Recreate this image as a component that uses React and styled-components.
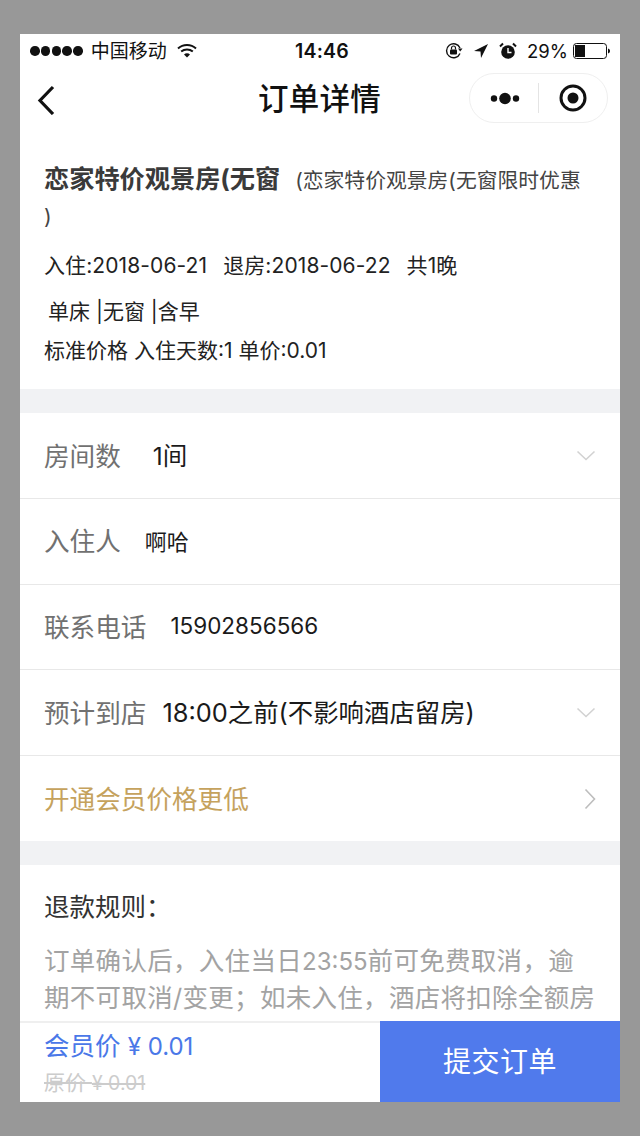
import React from 'react';
import styled, { createGlobalStyle } from 'styled-components';

const Global = createGlobalStyle`
  html, body { margin: 0; padding: 0; background: #989898; }
  body { font-family: Inter, "Noto Sans CJK SC", sans-serif; }
  * { box-sizing: border-box; }
`;
const Page = styled.div`
  width: 640px; height: 1136px; padding: 34px 20px; background: #989898;
`;
const Phone = styled.div`
  width: 600px; height: 1068px; background: #fff; display: flex; flex-direction: column; overflow: hidden;
`;
const StatusBar = styled.div`
  height: 34px; flex: none; display: grid; grid-template-columns: 1fr auto 1fr; align-items: center;
  padding: 0 9px 0 10px; color: #111;
`;
const StatusLeft = styled.div`display: flex; align-items: center;`;
const StatusRight = styled.div`display: flex; align-items: center; justify-content: flex-end;`;
const Dots = styled.div`display: flex; gap: 1.2px; margin-right: 8px;`;
const Dot = styled.span`width: 9.6px; height: 9.6px; border-radius: 50%; background: #111;`;
const Carrier = styled.span`font-size: 19px; margin-right: 10px; line-height: 1;`;
const Time = styled.span`font-size: 19.5px; font-weight: 600; letter-spacing: .2px; margin-left: 3px;`;
const Percent = styled.span`font-size: 18.5px; margin: 0 5px 0 10px;`;
const StatusIcon = styled.svg`display: block; margin-left: ${p => p.$gap || 0}px;`;

const NavBar = styled.div`
  height: 66px; flex: none; position: relative; display: flex; align-items: center; justify-content: center;
`;
const NavTitle = styled.div`font-size: 30.5px; font-weight: 500; color: #111; letter-spacing: .3px; margin: -8px 0 0 -1px;`;
const BackButton = styled.svg`position: absolute; left: 16px; top: 17px;`;
const Capsule = styled.div`
  position: absolute; right: 12px; top: 5px; width: 139px; height: 50px; border-radius: 25px;
  border: 1px solid #efefef; display: flex; align-items: center; background: #fff;
`;
const CapsuleCell = styled.div`flex: 1; height: 100%; display: flex; align-items: center; justify-content: center;`;
const CapsuleDivider = styled.div`width: 1px; height: 30px; background: #e4e4e4;`;

const Summary = styled.section`
  height: 255.4px; flex: none; padding: 23px 24px 0; color: #222;
`;
const TitleLine = styled.div`font-size: 20.8px; line-height: 44px; color: #444; white-space: nowrap;`;
const HotelName = styled.span`font-size: 25.2px; font-weight: 700; color: #3a3a3a; margin-right: 15px;`;
const Paren = styled.div`font-size: 21px; line-height: 26px; margin-top: 1px; color: #444;`;
const InfoLine = styled.div`
  font-size: 21px; line-height: 30px; color: #222; margin-top: ${p => p.$top}px; padding-left: ${p => p.$indent || 0}px;
  white-space: pre; display: flex; gap: ${p => p.$gap || 0}px; letter-spacing: ${p => p.$track || 0}px;
`;
const Gap = styled.div`height: 24px; flex: none; background: #f1f2f4;`;
const Row = styled.div`
  height: ${p => p.$h || 85.7}px; flex: none; display: flex; align-items: center; padding: 0 24px;
  border-bottom: ${p => p.$last ? 'none' : '1px solid #e8e8e8'};
`;
const RowLabel = styled.span`font-size: 25.6px; color: ${p => p.$gold ? '#c5a25d' : '#717171'}; flex: none; margin-top: -3px;`;
const RowValue = styled.span`font-size: ${p => p.$size || 24.5}px; color: #1a1a1a; margin-left: ${p => p.$gap}px; flex: 1; margin-top: -3px;`;
const Arrow = styled.svg`flex: none; display: block; margin-left: auto;`;

const Rules = styled.section`
  flex: 1; min-height: 0; padding: 24px 24px 0; overflow: hidden;
`;
const RulesTitle = styled.div`font-size: 25.5px; line-height: 36px; color: #333;`;
const RulesText = styled.div`font-size: 25.5px; line-height: 36px; color: #a3a3a3; margin-top: 18px; letter-spacing: .3px;`;
const RulesTime = styled.span`font-size: 24px; letter-spacing: 0;`;

const Footer = styled.div`
  height: 81px; flex: none; display: flex; border-top: 2px solid #efefef; background: #fff;
`;
const Prices = styled.div`flex: 1; padding: 5px 0 0 24px;`;
const Member = styled.div`font-size: 25.5px; line-height: 36px; color: #4a78e8;`;
const MemberAmount = styled.span`font-size: 24px;`;
const Original = styled.div`font-size: 21px; line-height: 30px; color: #ccc; text-decoration: line-through; margin-top: 3px;`;
const OriginalAmount = styled.span`font-size: 19.5px;`;
const Submit = styled.div`
  width: 240px; margin-top: -2px; padding-bottom: 4px; background: #507aec; color: #fff; font-size: 28px; display: flex;
  align-items: center; justify-content: center; letter-spacing: .5px;
`;

const Chevron = () => (
  <Arrow width="20" height="12" viewBox="0 0 20 12" fill="none">
    <path d="M1.5 1.5 L10 9.5 L18.5 1.5" stroke="#d2d2d2" strokeWidth="1.6" />
  </Arrow>
);

export default function App() {
  return (
    <Page>
      <Global />
      <Phone>
        <StatusBar>
          <StatusLeft>
            <Dots>{[0, 1, 2, 3, 4].map(i => <Dot key={i} />)}</Dots>
            <Carrier>中国移动</Carrier>
            <svg width="20" height="16" viewBox="0 0 20 16" fill="none">
              <path d="M1 5.5 C6 .8 14 .8 19 5.5" stroke="#111" strokeWidth="2" />
              <path d="M4.2 8.6 C7.5 5.8 12.5 5.8 15.8 8.6" stroke="#111" strokeWidth="2" />
              <path d="M7 11.4 C8.8 10 11.2 10 13 11.4 L10 14.6 Z" fill="#111" />
            </svg>
          </StatusLeft>
          <Time>14:46</Time>
          <StatusRight>
            <StatusIcon width="20" height="18" viewBox="0 0 20 18" fill="none">
              <path d="M16 11.5 A7 7 0 1 1 16 6" stroke="#111" strokeWidth="1.4" />
              <path d="M14 6.5 L18.5 6.5 L16.2 9.5 Z" fill="#111" />
              <rect x="6" y="7.5" width="7" height="5" rx="1" fill="#111" />
              <path d="M7.5 7.5 V6 A2 2 0 0 1 11.5 6 V7.5" stroke="#111" strokeWidth="1.2" />
            </StatusIcon>
            <StatusIcon $gap={9} width="16" height="16" viewBox="0 0 16 16">
              <path d="M15 1 L1 8 L7.5 8.5 L8 15 Z" fill="#111" />
            </StatusIcon>
            <StatusIcon $gap={10} width="18" height="18" viewBox="0 0 18 18" fill="none">
              <circle cx="9" cy="10" r="6.8" fill="#111" />
              <path d="M9 6 V10.5 H12.5" stroke="#fff" strokeWidth="1.4" />
              <path d="M1 4.5 L4 1.5 M17 4.5 L14 1.5" stroke="#111" strokeWidth="2" />
            </StatusIcon>
            <Percent>29%</Percent>
            <svg width="38" height="16" viewBox="0 0 38 16" fill="none">
              <rect x=".5" y=".5" width="33" height="15" rx="3" stroke="#111" />
              <rect x="2" y="2" width="10" height="12" fill="#111" />
              <path d="M35 5.5 C36.5 6 37 7 37 8 C37 9 36.5 10 35 10.5 Z" fill="#111" />
            </svg>
          </StatusRight>
        </StatusBar>
        <NavBar>
          <BackButton width="20" height="30" viewBox="0 0 20 30" fill="none">
            <path d="M17 2 L4 15.5 L17 29" stroke="#111" strokeWidth="3.2" />
          </BackButton>
          <NavTitle>订单详情</NavTitle>
          <Capsule>
            <CapsuleCell>
              <svg width="32" height="13" viewBox="0 0 32 13">
                <circle cx="6" cy="6.5" r="3.2" fill="#111" />
                <circle cx="17" cy="6.5" r="5.8" fill="#111" />
                <circle cx="28" cy="6.5" r="3.2" fill="#111" />
              </svg>
            </CapsuleCell>
            <CapsuleDivider />
            <CapsuleCell>
              <svg width="28" height="28" viewBox="0 0 28 28" fill="none">
                <circle cx="14" cy="14" r="12" stroke="#111" strokeWidth="3" />
                <circle cx="14" cy="14" r="5.5" fill="#111" />
              </svg>
            </CapsuleCell>
          </Capsule>
        </NavBar>
        <Summary>
          <TitleLine><HotelName>恋家特价观景房(无窗</HotelName>(恋家特价观景房(无窗限时优惠</TitleLine>
          <Paren>)</Paren>
          <InfoLine $top={21} $gap={16} $track={0.1}>
            <span>入住:2018-06-21</span>
            <span>退房:2018-06-22</span>
            <span>共1晚</span>
          </InfoLine>
          <InfoLine $top={16} $indent={4}>单床 |无窗 |含早</InfoLine>
          <InfoLine $top={9}>标准价格 入住天数:1 单价:0.01</InfoLine>
        </Summary>
        <Gap />
        <Row>
          <RowLabel>房间数</RowLabel>
          <RowValue $gap={32}>1间</RowValue>
          <Chevron />
        </Row>
        <Row>
          <RowLabel>入住人</RowLabel>
          <RowValue $gap={24} $size={22}>啊哈</RowValue>
        </Row>
        <Row>
          <RowLabel>联系电话</RowLabel>
          <RowValue $gap={24} $size={22.5}>15902856566</RowValue>
        </Row>
        <Row>
          <RowLabel>预计到店</RowLabel>
          <RowValue $gap={16} $size={25.4}>18:00之前(不影响酒店留房)</RowValue>
          <Chevron />
        </Row>
        <Row $last $h={85}>
          <RowLabel $gold>开通会员价格更低</RowLabel>
          <Arrow width="12" height="22" viewBox="0 0 12 22" fill="none">
            <path d="M1.5 1.5 L10.5 11 L1.5 20.5" stroke="#bdbdbd" strokeWidth="1.6" />
          </Arrow>
        </Row>
        <Gap />
        <Rules>
          <RulesTitle>退款规则：</RulesTitle>
          <RulesText>订单确认后，入住当日<RulesTime>23:55</RulesTime>前可免费取消，逾期不可取消/变更；如未入住，酒店将扣除全额房</RulesText>
        </Rules>
        <Footer>
          <Prices>
            <Member>会员价 <MemberAmount>¥ 0.01</MemberAmount></Member>
            <Original>原价 <OriginalAmount>¥ 0.01</OriginalAmount></Original>
          </Prices>
          <Submit>提交订单</Submit>
        </Footer>
      </Phone>
    </Page>
  );
}
